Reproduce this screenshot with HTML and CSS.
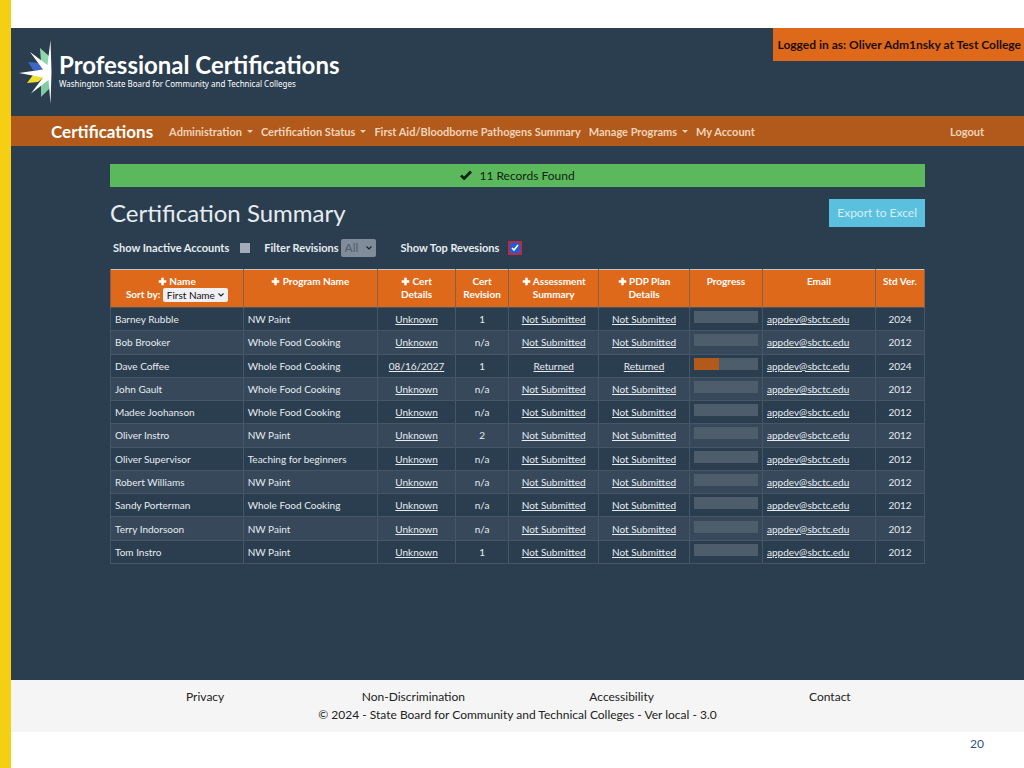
FILE: index.html
```html
<!DOCTYPE html>
<html lang="en">
<head>
  <meta charset="UTF-8">
  <meta name="viewport" content="width=device-width, initial-scale=1">
  <title>Professional Certifications</title>
  <link rel="stylesheet" href="styles.css">
</head>
<body>

<svg width="0" height="0" class="sprite" aria-hidden="true">
  <symbol id="plus" viewBox="0 0 10 10"><path d="M3.6 0.8h2.8v2.8h2.8v2.8H6.4v2.8H3.6V6.4H0.8V3.6h2.8z" fill="currentColor"/></symbol>
</svg>

<div class="app">
  <header class="banner">
    <div class="logo">
      <svg class="logo-mark" viewBox="0 0 34 64" aria-hidden="true">
        <path d="M21 8l9 8 1 16-9-11z" fill="#8fd8ae"/>
        <path d="M22 57l8-8 1-16-9 11z" fill="#7fcba4"/>
        <path d="M9 22l11 1 11 10-17-3z" fill="#3f66c4"/>
        <path d="M8 43l11-1 12-10-17 3z" fill="#f0e02c"/>
        <path d="M31.5 0l1 32-1 32-2-24-17.500 13.500 12-16L0 33l24-3.500L11 12l17.500 13z" fill="#fff"/>
      </svg>
      <div>
        <div class="logo-name">Professional Certifications</div>
        <div class="logo-sub">Washington State Board for Community and Technical Colleges</div>
      </div>
    </div>
    <div class="login-info">Logged in as: Oliver Adm1nsky at Test College</div>
  </header>

  <nav class="navbar">
    <a href="#" class="brand">Certifications</a>
    <a href="#" class="dropdown">Administration</a>
    <a href="#" class="dropdown">Certification Status</a>
    <a href="#">First Aid/Bloodborne Pathogens Summary</a>
    <a href="#" class="dropdown">Manage Programs</a>
    <a href="#">My Account</a>
    <a href="#" class="logout">Logout</a>
  </nav>

  <main class="content">
    <div class="alert">
      <svg class="check" viewBox="0 0 12 10" aria-hidden="true"><path d="M1 5.5l3.2 3L11 1.5" fill="none" stroke="currentColor" stroke-width="2.8"/></svg>
      11 Records Found
    </div>

    <div class="title-row">
      <h1>Certification Summary</h1>
      <button type="button" class="export">Export to Excel</button>
    </div>

    <div class="filters">
      <label for="inactive">Show Inactive Accounts</label>
      <input type="checkbox" id="inactive" class="box">
      <label for="revisions">Filter Revisions</label>
      <select id="revisions" class="revisions" disabled><option>All</option></select>
      <label for="top">Show Top Revesions</label>
      <input type="checkbox" id="top" class="box top" checked>
    </div>

    <table class="summary">
      <colgroup>
        <col class="c-name"><col class="c-program"><col class="c-cert"><col class="c-rev"><col class="c-assess">
        <col class="c-pdp"><col class="c-progress"><col class="c-email"><col class="c-ver">
      </colgroup>
      <thead>
        <tr>
          <th><svg class="plus"><use href="#plus"/></svg> Name<br>
            <label for="sort">Sort by:</label> <select id="sort" class="sort"><option>First Name</option><option>Last Name</option></select></th>
          <th><svg class="plus"><use href="#plus"/></svg> Program Name</th>
          <th><svg class="plus"><use href="#plus"/></svg> Cert<br>Details</th>
          <th>Cert<br>Revision</th>
          <th><svg class="plus"><use href="#plus"/></svg> Assessment<br>Summary</th>
          <th><svg class="plus"><use href="#plus"/></svg> PDP Plan<br>Details</th>
          <th>Progress</th>
          <th>Email</th>
          <th>Std Ver.</th>
        </tr>
      </thead>
      <tbody id="rows"></tbody>
    </table>
  </main>

  <footer class="footer">
    <div class="footer-links">
      <a href="#">Privacy</a>
      <a href="#">Non-Discrimination</a>
      <a href="#">Accessibility</a>
      <a href="#">Contact</a>
    </div>
    <div>&copy; 2024 - State Board for Community and Technical Colleges - Ver local - 3.0</div>
  </footer>
</div>

<div class="page-number">20</div>

<script src="script.js"></script>
</body>
</html>
```
FILE: styles.css
```css
* {
  box-sizing: border-box;
}

body {
  margin: 0;
  padding-top: 28px;
  min-height: 100vh;
  border-left: 11px solid #f5cf13;
  background-color: #fff;
  font-family: Lato, sans-serif;
  font-size: 12px;
  color: #e6ecf0;
}

a {
  color: inherit;
  text-decoration: none;
}

.sprite {
  position: absolute;
}

.app {
  display: flex;
  flex-direction: column;
  min-height: calc(100vh - 64px);
  background-color: #2b3e4f;
}

/* Banner */
.banner {
  display: flex;
  justify-content: space-between;
  align-items: flex-start;
  height: 88px;
}

.logo {
  display: flex;
  align-items: center;
  gap: 6px;
  padding: 12px 0 0 8px;
  color: #fff;
}

.logo-mark {
  width: 34px;
  height: 64px;
}

.logo-name {
  font-weight: bold;
  font-size: 24px;
  line-height: 28px;
}

.logo-sub {
  margin-bottom: 4px;
  font-family: "Noto Sans", sans-serif;
  font-size: 8px;
  line-height: 10px;
}

.login-info {
  padding: 0 3px 0 5px;
  background-color: #df691a;
  color: #1b0f0f;
  font-weight: bold;
  line-height: 33px;
}

/* Navbar */
.navbar {
  display: flex;
  align-items: center;
  gap: 8px;
  height: 30px;
  padding: 0 40px;
  background-color: #b15a1b;
  color: #f3d3b8;
  font-size: 11px;
  font-weight: bold;
}

.brand {
  margin-right: 8px;
  color: #fff;
  font-size: 17px;
}

.dropdown::after {
  content: "";
  display: inline-block;
  margin-left: 5px;
  vertical-align: 3px;
  border: 3px solid transparent;
  border-top-color: currentColor;
  border-bottom: 0;
}

.logout {
  margin-left: auto;
}

/* Content */
.content {
  flex: 1;
  padding: 18px 99px;
}

.alert {
  background-color: #5cb85c;
  color: #14240f;
  line-height: 23px;
  text-align: center;
}

.check {
  width: 12px;
  height: 10px;
  margin-right: 4px;
}

.title-row {
  display: flex;
  justify-content: space-between;
  align-items: center;
  margin-top: 11px;
}

h1 {
  margin: 0;
  font-size: 24px;
  font-weight: normal;
}

.export {
  height: 28px;
  padding: 0 8px;
  border: 0;
  background-color: #5bc0de;
  color: #d5eef7;
  font-family: inherit;
  font-size: 12px;
}

.filters {
  display: flex;
  align-items: center;
  height: 19px;
  margin: 11px 0 12px;
  padding-left: 3px;
  font-size: 11px;
  font-weight: bold;
}

.box {
  width: 10px;
  height: 10px;
  margin: 0 14px 0 11px;
}

.box:not(:checked) {
  appearance: none;
  background-color: #a4abba;
}

.top {
  accent-color: #1a5fd8;
  outline: 2px solid #b8294a;
}

/* Selects with their own chevron */
.revisions,
.sort {
  appearance: none;
  border: 0;
  border-radius: 2px;
  background: #f0f0f2 url("data:image/svg+xml,%3Csvg xmlns='http://www.w3.org/2000/svg' width='6' height='4'%3E%3Cpath d='M.5.5L3 3L5.500.500' fill='none' stroke='%23222' stroke-width='1.2'/%3E%3C/svg%3E") no-repeat right 4px center;
  color: #111;
  font-family: inherit;
}

.revisions {
  width: 35px;
  height: 18px;
  margin: 0 25px 0 2px;
  padding: 0 0 0 4px;
  background-color: #8a95a3;
  color: #56626f;
  font-size: 12px;
  opacity: 0.9;
}

.sort {
  width: 65px;
  height: 14px;
  padding: 0 0 0 4px;
  font-size: 10px;
  vertical-align: middle;
}

/* Table */
.summary {
  width: 100%;
  height: 295px;
  table-layout: fixed;
  border-collapse: collapse;
  font-size: 10px;
  line-height: 14px;
}

.c-name { width: 16.3%; }
.c-program { width: 16.5%; }
.c-cert { width: 9.6%; }
.c-rev { width: 6.5%; }
.c-assess { width: 11.1%; }
.c-pdp { width: 11.1%; }
.c-progress { width: 9%; }
.c-email { width: 13.9%; }
.c-ver { width: 6%; }

.summary thead {
  height: 38px;
  border-top: 1px solid #c3c8cc;
}

.summary th {
  padding: 5px 0 4px;
  background-color: #df691a;
  border-left: 1px solid #85624a;
  border-right: 1px solid #85624a;
  color: #fff;
  font-size: 10px;
  line-height: 13px;
  vertical-align: top;
}

.summary td {
  padding: 0 4px;
  border: 1px solid #455666;
  text-align: center;
}

.summary td:nth-child(1),
.summary td:nth-child(2),
.summary td:nth-child(8) {
  text-align: left;
}

.summary tbody tr:nth-child(even) {
  background-color: #36485a;
}

.summary td a {
  text-decoration: underline;
}

.plus {
  width: 9px;
  height: 9px;
  vertical-align: -1px;
}

.progress {
  height: 12px;
  margin-bottom: 4px;
  background-color: #4e5d6c;
}

.progress-bar {
  height: 100%;
  background-color: #b15a1b;
}

/* Footer */
.footer {
  padding: 8px 90px;
  background-color: #f5f5f5;
  color: #222;
  line-height: 18px;
  text-align: center;
}

.footer-links {
  display: grid;
  grid-template-columns: repeat(4, 1fr);
}

.page-number {
  padding: 4px 40px 0 0;
  color: #2a567f;
  line-height: 16px;
  text-align: right;
}
```
FILE: script.js
```javascript
const people = [
  ['Barney Rubble', 'NW Paint', 'Unknown', '1', 'Not Submitted', 0, '2024'],
  ['Bob Brooker', 'Whole Food Cooking', 'Unknown', 'n/a', 'Not Submitted', 0, '2012'],
  ['Dave Coffee', 'Whole Food Cooking', '08/16/2027', '1', 'Returned', 40, '2024'],
  ['John Gault', 'Whole Food Cooking', 'Unknown', 'n/a', 'Not Submitted', 0, '2012'],
  ['Madee Joohanson', 'Whole Food Cooking', 'Unknown', 'n/a', 'Not Submitted', 0, '2012'],
  ['Oliver Instro', 'NW Paint', 'Unknown', '2', 'Not Submitted', 0, '2012'],
  ['Oliver Supervisor', 'Teaching for beginners', 'Unknown', 'n/a', 'Not Submitted', 0, '2012'],
  ['Robert Williams', 'NW Paint', 'Unknown', 'n/a', 'Not Submitted', 0, '2012'],
  ['Sandy Porterman', 'Whole Food Cooking', 'Unknown', 'n/a', 'Not Submitted', 0, '2012'],
  ['Terry Indorsoon', 'NW Paint', 'Unknown', 'n/a', 'Not Submitted', 0, '2012'],
  ['Tom Instro', 'NW Paint', 'Unknown', '1', 'Not Submitted', 0, '2012']
];

document.getElementById('rows').innerHTML = people.map(([name, program, cert, revision, status, progress, version]) => `
  <tr>
    <td>${name}</td>
    <td>${program}</td>
    <td><a href="#">${cert}</a></td>
    <td>${revision}</td>
    <td><a href="#">${status}</a></td>
    <td><a href="#">${status}</a></td>
    <td><div class="progress"><div class="progress-bar" style="width: ${progress}%"></div></div></td>
    <td><a href="mailto:appdev@sbctc.edu">appdev@sbctc.edu</a></td>
    <td>${version}</td>
  </tr>`).join('');
```
